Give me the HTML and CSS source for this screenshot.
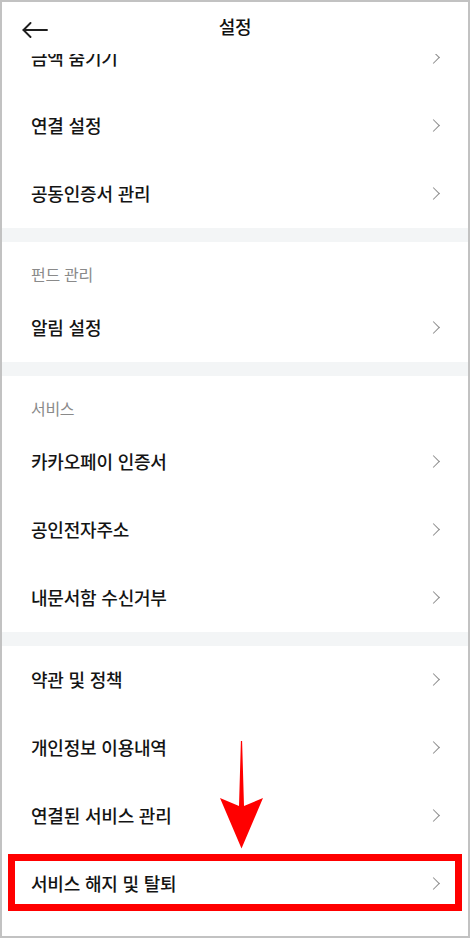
FILE: index.html
```html
<!DOCTYPE html>
<html lang="ko">
<head>
    <meta charset="UTF-8">
    <meta name="viewport" content="width=device-width, initial-scale=1.0">
    <link rel="stylesheet" href="styles.css">
    <title>설정</title>
</head>
<body>
    <div class="phone">
        <!-- top bar -->
        <header class="topbar">
            <button class="back-btn" type="button" aria-label="뒤로">
                <svg width="26" height="16" viewBox="0 0 26 16" fill="none" stroke="#1f1f1f" stroke-width="1.9" stroke-linecap="round" stroke-linejoin="round">
                    <path d="M1.5 8 H25"/>
                    <path d="M8.5 1 L1.5 8 L8.5 15"/>
                </svg>
            </button>
            <h1 class="title">설정</h1>
            <span></span>
        </header>

        <div class="scroll">
            <ul class="group">
                <li class="row row-cut">금액 숨기기<i class="chev"></i></li>
                <li class="row">연결 설정<i class="chev"></i></li>
                <li class="row">공동인증서 관리<i class="chev"></i></li>
            </ul>
            <div class="divider"></div>

            <ul class="group">
                <li class="group-title">펀드 관리</li>
                <li class="row">알림 설정<i class="chev"></i></li>
            </ul>
            <div class="divider"></div>

            <ul class="group">
                <li class="group-title">서비스</li>
                <li class="row">카카오페이 인증서<i class="chev"></i></li>
                <li class="row">공인전자주소<i class="chev"></i></li>
                <li class="row">내문서함 수신거부<i class="chev"></i></li>
            </ul>
            <div class="divider"></div>

            <ul class="group">
                <li class="row">약관 및 정책<i class="chev"></i></li>
                <li class="row">개인정보 이용내역<i class="chev"></i></li>
                <li class="row">연결된 서비스 관리<i class="chev"></i></li>
                <li class="row row-marked">서비스 해지 및 탈퇴<i class="chev"></i><span class="mark-box"></span></li>
            </ul>
        </div>

        <!-- red pointer over the list -->
        <svg class="pointer" width="45" height="108" viewBox="0 0 45 108">
            <path d="M21.9 0 L23.1 0 L25 65 L44 57 L22.5 107.5 L1 57 L20 65 Z" fill="#ff0000"/>
        </svg>
    </div>
</body>
</html>
```

FILE: styles.css
```css
* {
  margin: 0;
  padding: 0;
  box-sizing: border-box;
}

body {
  background-color: #fff;
  font-family: "Noto Sans CJK KR", "Noto Sans", sans-serif;
  color: #141414;
}

.phone {
  position: relative;
  width: 470px;
  height: 938px;
  border: 2px solid #c2c2c2;
  background-color: #fff;
  display: flex;
  flex-direction: column;
  overflow: hidden;
}

.topbar {
  height: 52px;
  flex-shrink: 0;
  display: grid;
  grid-template-columns: 1fr auto 1fr;
  align-items: center;
  background-color: #fff;
  position: relative;
  z-index: 2;
}

.back-btn {
  justify-self: start;
  margin-left: 20px;
  margin-top: 4px;
  border: none;
  background: none;
  display: flex;
}

.title {
  font-size: 18px;
  font-weight: 500;
  color: #111;
  letter-spacing: -0.3px;
  margin-top: -4px;
}

.scroll {
  flex: 1;
  overflow: hidden;
}

.group {
  list-style: none;
}

.row {
  position: relative;
  height: 68px;
  display: flex;
  align-items: center;
  justify-content: space-between;
  padding: 0 28px 2px 29px;
  font-size: 18px;
  font-weight: 500;
  letter-spacing: -0.2px;
}

/* first row is scrolled half under the top bar */
.row-cut {
  margin-top: -30px;
}

.group-title {
  height: 52px;
  padding: 20px 28px 0 29px;
  font-size: 16px;
  color: #8a8a8a;
  letter-spacing: -0.3px;
}

.divider {
  height: 14px;
  background-color: #f3f5f6;
}

.chev {
  width: 9px;
  height: 9px;
  border-top: 1.5px solid #8c8c8c;
  border-right: 1.5px solid #8c8c8c;
  transform: rotate(45deg);
  margin-right: 2px;
}

.mark-box {
  position: absolute;
  top: 4px;
  bottom: 7px;
  left: 6px;
  right: 6px;
  border: 7px solid #ff0000;
}

.pointer {
  position: absolute;
  left: 217px;
  top: 739px;
}
```
